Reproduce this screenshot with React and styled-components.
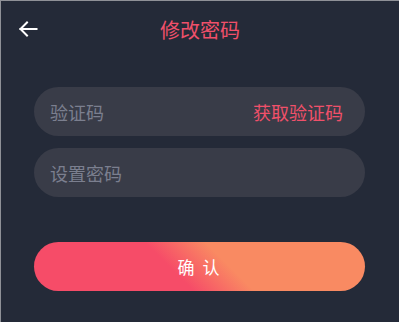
import React from 'react'
import styled, { createGlobalStyle } from 'styled-components'

const GlobalStyle = createGlobalStyle`
  html, body {
    margin: 0;
    padding: 0;
    background: #242a38;
  }
  body {
    font-family: "Noto Sans CJK SC", "Noto Sans", sans-serif;
  }
  * {
    box-sizing: border-box;
  }
`

const Page = styled.div`
  width: 399px;
  height: 322px;
  background: #242a38;
  border-top: 1px solid #8f9197;
  border-left: 1px solid #8f9197;
`

const Header = styled.div`
  position: relative;
  height: 57px;
  display: flex;
  align-items: center;
  justify-content: center;
`

const BackButton = styled.button`
  position: absolute;
  left: 16px;
  top: 17px;
  width: 22px;
  height: 22px;
  padding: 0;
  border: 0;
  background: none;
  display: flex;
  align-items: center;
  justify-content: center;
  cursor: pointer;
`

const Title = styled.h1`
  margin: 0;
  font-size: 20px;
  font-weight: 400;
  color: #f0506a;
  line-height: 1;
`

const Form = styled.form`
  display: flex;
  flex-direction: column;
  gap: 12px;
  padding: 29px 34px 0 33px;
`

const Field = styled.div`
  height: 49px;
  border-radius: 25px;
  background: #393c48;
  display: flex;
  align-items: center;
  padding: 0 22px 0 14px;
`

const Input = styled.input`
  flex: 1;
  min-width: 0;
  border: 0;
  outline: none;
  background: transparent;
  font-family: inherit;
  font-size: 18px;
  color: #d8dae2;
  &::placeholder {
    color: #7b7f8f;
  }
`

const CodeLink = styled.span`
  font-size: 18px;
  color: #f0506a;
  cursor: pointer;
`

const Submit = styled.button`
  margin-top: 33px;
  height: 49px;
  border: 0;
  border-radius: 25px;
  background: linear-gradient(45deg, #f64c68 0%, #f64c68 42%, #f98a62 58%, #f98a62 100%);
  color: #fff;
  font-family: inherit;
  font-size: 17px;
  letter-spacing: 2px;
  cursor: pointer;
`

export default function App() {
  return (
    <>
      <GlobalStyle />
      <Page>
        <Header>
          <BackButton type="button" aria-label="返回">
            <svg width="20" height="20" viewBox="0 0 20 20" fill="none" stroke="#fff" strokeWidth="2" strokeLinecap="square">
              <path d="M18.5 10H2.5" />
              <path d="M9 3.5L2.5 10L9 16.5" />
            </svg>
          </BackButton>
          <Title>修改密码</Title>
        </Header>
        <Form onSubmit={e => e.preventDefault()}>
          <Field>
            <Input placeholder="验证码" />
            <CodeLink>获取验证码</CodeLink>
          </Field>
          <Field>
            <Input type="password" placeholder="设置密码" />
          </Field>
          <Submit type="submit">确 认</Submit>
        </Form>
      </Page>
    </>
  )
}
